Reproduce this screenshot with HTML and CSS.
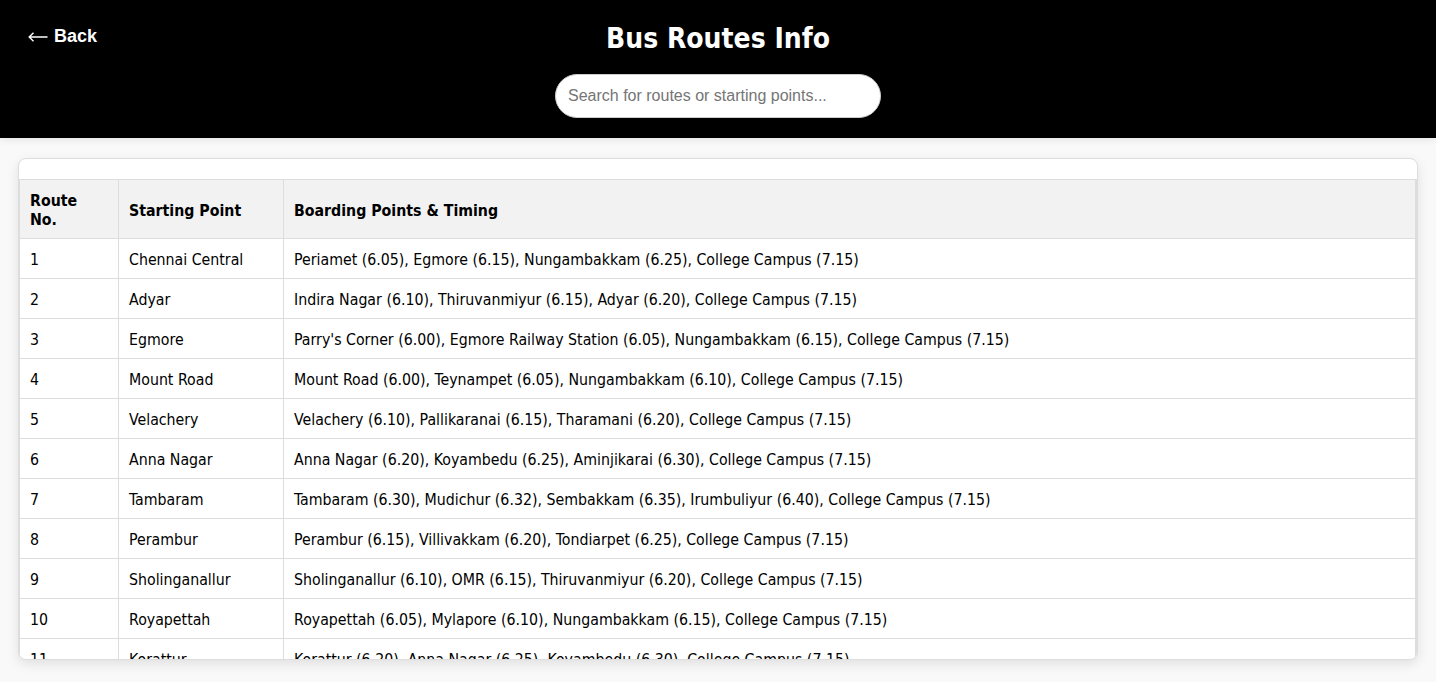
FILE: index.html
```html
<!DOCTYPE html>
<html lang="en">
<head>
<meta charset="utf-8">
<title>Bus Routes Info</title>
<link rel="stylesheet" href="styles.css">
</head>
<body>
<header class="top">
  <a class="back" href="#"><svg class="arrow" width="20" height="10" viewBox="0 0 20 10" aria-hidden="true"><path d="M19.5 5H1.2M5.5 0.8L1.2 5l4.3 4.2" fill="none" stroke="#fff" stroke-width="1.4"/></svg>Back</a>
  <h1 class="title">Bus Routes Info</h1>
  <input class="search" type="text" placeholder="Search for routes or starting points...">
</header>
<main class="wrap">
  <table class="routes">
    <thead>
      <tr><th class="c1">Route No.</th><th class="c2">Starting Point</th><th>Boarding Points &amp; Timing</th></tr>
    </thead>
    <tbody>
      <tr><td>1</td><td>Chennai Central</td><td>Periamet (6.05), Egmore (6.15), Nungambakkam (6.25), College Campus (7.15)</td></tr>
      <tr><td>2</td><td>Adyar</td><td>Indira Nagar (6.10), Thiruvanmiyur (6.15), Adyar (6.20), College Campus (7.15)</td></tr>
      <tr><td>3</td><td>Egmore</td><td>Parry's Corner (6.00), Egmore Railway Station (6.05), Nungambakkam (6.15), College Campus (7.15)</td></tr>
      <tr><td>4</td><td>Mount Road</td><td>Mount Road (6.00), Teynampet (6.05), Nungambakkam (6.10), College Campus (7.15)</td></tr>
      <tr><td>5</td><td>Velachery</td><td>Velachery (6.10), Pallikaranai (6.15), Tharamani (6.20), College Campus (7.15)</td></tr>
      <tr><td>6</td><td>Anna Nagar</td><td>Anna Nagar (6.20), Koyambedu (6.25), Aminjikarai (6.30), College Campus (7.15)</td></tr>
      <tr><td>7</td><td>Tambaram</td><td>Tambaram (6.30), Mudichur (6.32), Sembakkam (6.35), Irumbuliyur (6.40), College Campus (7.15)</td></tr>
      <tr><td>8</td><td>Perambur</td><td>Perambur (6.15), Villivakkam (6.20), Tondiarpet (6.25), College Campus (7.15)</td></tr>
      <tr><td>9</td><td>Sholinganallur</td><td>Sholinganallur (6.10), OMR (6.15), Thiruvanmiyur (6.20), College Campus (7.15)</td></tr>
      <tr><td>10</td><td>Royapettah</td><td>Royapettah (6.05), Mylapore (6.10), Nungambakkam (6.15), College Campus (7.15)</td></tr>
      <tr><td>11</td><td>Korattur</td><td>Korattur (6.20), Anna Nagar (6.25), Koyambedu (6.30), College Campus (7.15)</td></tr>
      <tr><td>12</td><td>Guindy</td><td>Guindy (6.15), Saidapet (6.20), T. Nagar (6.25), College Campus (7.15)</td></tr>
      <tr><td>13</td><td>Porur</td><td>Porur (6.20), Valasaravakkam (6.25), Vadapalani (6.30), College Campus (7.15)</td></tr>
    </tbody>
  </table>
</main>
</body>
</html>
```

FILE: styles.css
```css
html, body {
  margin: 0;
  padding: 0;
}
body {
  background: #f9f9f9;
  font-family: "DejaVu Sans Condensed", "DejaVu Sans", sans-serif;
  color: #000;
}
.top {
  position: relative;
  background: #000;
  color: #fff;
  padding: 22px 0 20px;
  display: flex;
  flex-direction: column;
  align-items: center;
  gap: 18px;
  box-shadow: 0 2px 8px rgba(0,0,0,0.08);
}
.back {
  position: absolute;
  left: 28px;
  top: 26px;
  display: flex;
  align-items: center;
  gap: 6px;
  color: #fff;
  text-decoration: none;
  font-family: "Liberation Sans", Arial, sans-serif;
  font-weight: bold;
  font-size: 18px;
  line-height: 20px;
}
.arrow {
  display: block;
  margin-top: 2px;
}
.title {
  margin: 0;
  font-family: "DejaVu Sans Condensed", "DejaVu Sans", sans-serif;
  font-weight: bold;
  font-size: 28px;
  line-height: 34px;
}
.search {
  width: 326px;
  height: 44px;
  box-sizing: border-box;
  padding: 0 12px;
  border: 1px solid #ccc;
  border-radius: 22px;
  font-family: "Liberation Sans", Arial, sans-serif;
  font-size: 16px;
  outline: none;
}
.search::placeholder {
  color: #757575;
}
.wrap {
  max-width: 1400px;
  margin: 20px auto;
  box-sizing: border-box;
  max-height: 502px;
  overflow: hidden;
  background: #fff;
  border: 1px solid #ddd;
  border-radius: 8px;
  box-shadow: 0 4px 12px rgba(0,0,0,0.1);
  padding-top: 20px;
}
.routes {
  width: 100%;
  border-collapse: collapse;
  font-size: 15.75px;
}
.routes th, .routes td {
  border: 1px solid #ddd;
  padding: 11px 10px 9px;
  text-align: left;
  line-height: 19px;
}
.routes th {
  background: #f2f2f2;
  font-weight: bold;
}
.routes tr > :last-child { border-right: 2px solid #ddd; }
.c1 { width: 78px; }
.c2 { width: 144px; }
```
